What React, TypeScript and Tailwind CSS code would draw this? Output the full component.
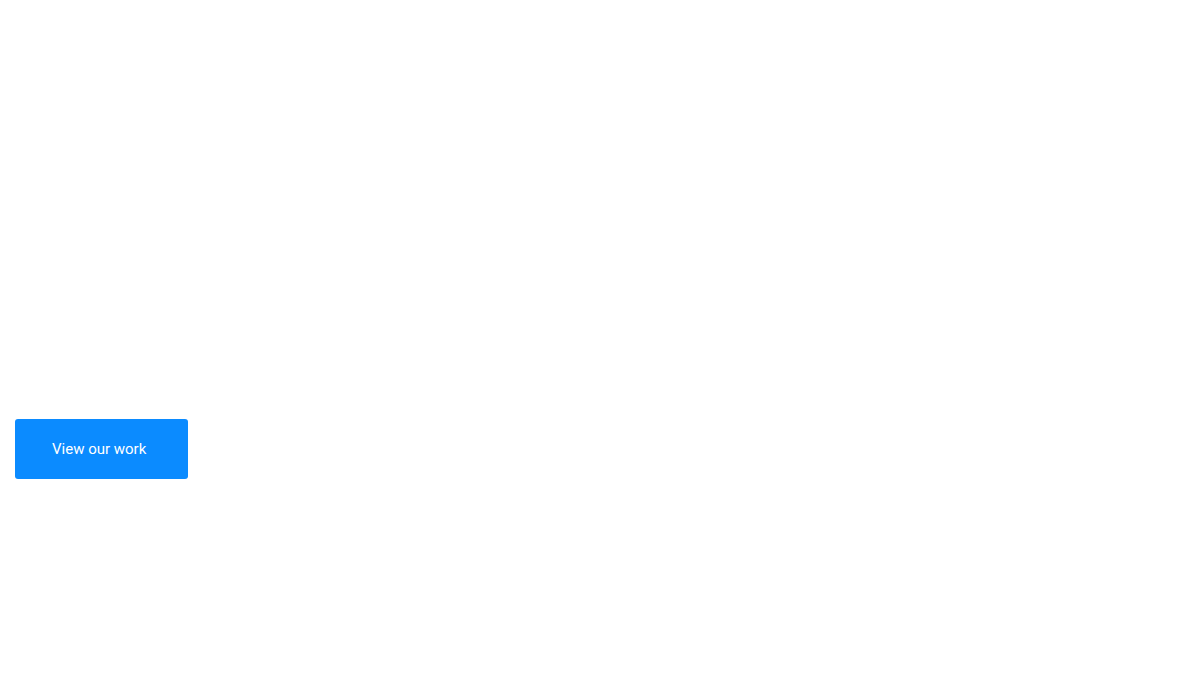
export default function App() {
  return (
    <div className="min-h-[679px] bg-white px-[15px] pt-[419px] font-['Roboto',sans-serif]">
      <a
        href="#work"
        className="inline-flex h-[60px] w-[173px] items-center rounded-[3px] bg-[#0b8bff] pl-[37px] text-[15px] text-white"
      >
        View our work
      </a>
    </div>
  );
}
